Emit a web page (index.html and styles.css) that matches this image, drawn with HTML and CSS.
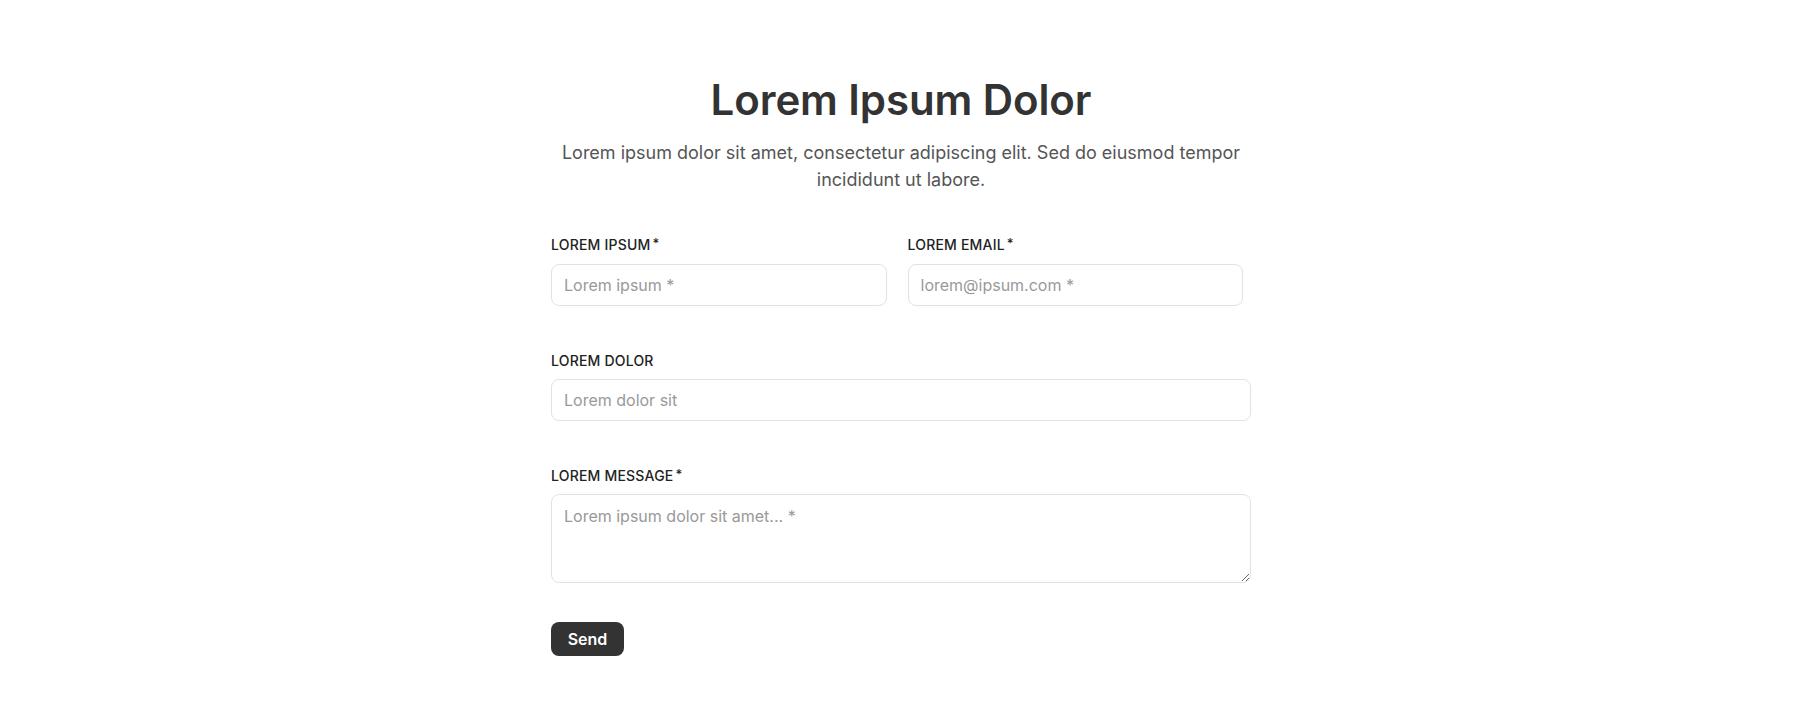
FILE: index.html
```html
<!DOCTYPE html>
<html lang="en">
<head>
<meta charset="UTF-8">
<meta name="viewport" content="width=device-width,initial-scale=1.0">
<title>Contact</title>
<link rel="stylesheet" href="styles.css">
</head>
<body>
    <div class="page">
        <div class="head">
            <h1 class="title">Lorem Ipsum Dolor</h1>
            <p class="lead">Lorem ipsum dolor sit amet, consectetur adipiscing elit. Sed do eiusmod tempor incididunt ut labore.</p>
        </div>
        <form class="form">
            <div class="row">
                <div class="field">
                    <label class="label">Lorem ipsum<span class="req">*</span></label>
                    <input class="input" type="text" placeholder="Lorem ipsum *">
                </div>
                <div class="field">
                    <label class="label">Lorem email<span class="req">*</span></label>
                    <input class="input" type="email" placeholder="lorem@ipsum.com *">
                </div>
            </div>
            <div class="field">
                <label class="label">Lorem dolor</label>
                <input class="input" type="text" placeholder="Lorem dolor sit">
            </div>
            <div class="field">
                <label class="label">Lorem message<span class="req">*</span></label>
                <textarea class="input area" placeholder="Lorem ipsum dolor sit amet... *"></textarea>
            </div>
            <div>
                <button class="send" type="button">Send</button>
            </div>
        </form>
    </div>
</body>
</html>
```

FILE: styles.css
```css
*{
    margin:0;
    padding:0;
    box-sizing:border-box;
}
body{
    background:#fff;
    font-family:Inter, "Noto Sans", sans-serif;
    color:#333;
    padding-right:13px;
}
.page{
    width:700px;
    margin:0 auto;
    padding-top:75px;
}
/* heading */
.head{
    text-align:center;
    margin-bottom:43px;
}
.title{
    font-size:42px;
    font-weight:600;
    line-height:50px;
    color:#333;
    letter-spacing:-0.1px;
}
.lead{
    margin-top:14px;
    font-size:18px;
    line-height:27px;
    color:#555;
}
/* form */
.form{
    display:flex;
    flex-direction:column;
    gap:46px;
}
.row{
    display:grid;
    grid-template-columns:1fr 1fr;
    column-gap:21px;
    padding-right:8px;
}
.field{
    display:flex;
    flex-direction:column;
}
.label{
    font-size:14px;
    font-weight:500;
    line-height:17px;
    letter-spacing:0.2px;
    text-transform:uppercase;
    color:#222;
    margin-bottom:10px;
}
.req{
    margin-left:2px;
    font-size:13px;
    position:relative;
    top:-2px;
}
.input{
    height:42px;
    border:1px solid #e2e2e2;
    border-radius:8px;
    padding:0 12px;
    font-family:inherit;
    font-size:16px;
    color:#333;
    background:#fff;
    outline:none;
}
.input::placeholder{
    color:#999;
}
.area{
    height:89px;
    margin-top:-1px;
    padding-top:11px;
    resize:vertical;
}
.send{
    margin-top:-7px;
    width:73px;
    height:34px;
    border:none;
    border-radius:8px;
    background:#333;
    color:#fff;
    font-family:inherit;
    font-size:16px;
    font-weight:600;
    cursor:pointer;
}
```
